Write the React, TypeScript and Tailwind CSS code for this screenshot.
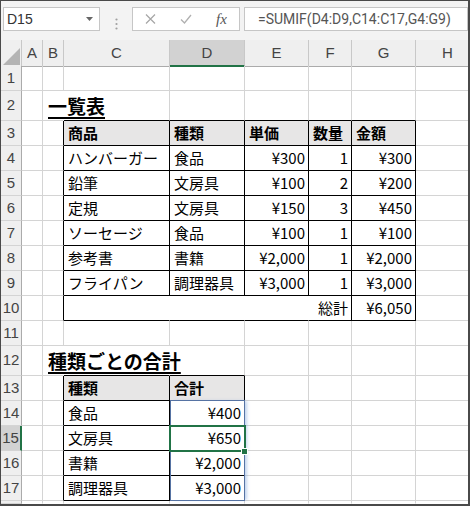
import React from 'react';

const COLS = 'grid grid-cols-[21px_21px_21px_106px_75px_64px_43px_64px_64px]';
const LETTERS = ['A', 'B', 'C', 'D', 'E', 'F', 'G', 'H'];

type Cell = { t: string; right?: boolean; bold?: boolean; fill?: boolean; title?: boolean };
type Box = { r1: number; r2: number; c1: number; c2: number };

const cells: Record<string, Cell> = {
  B2: { t: '一覧表', title: true },
  C3: { t: '商品', bold: true, fill: true },
  D3: { t: '種類', bold: true, fill: true },
  E3: { t: '単価', bold: true, fill: true },
  F3: { t: '数量', bold: true, fill: true },
  G3: { t: '金額', bold: true, fill: true },
  B12: { t: '種類ごとの合計', title: true },
  C13: { t: '種類', bold: true, fill: true },
  D13: { t: '合計', bold: true, fill: true },
  F10: { t: '総計', right: true },
  G10: { t: '¥6,050', right: true },
};

const items = [
  ['ハンバーガー', '食品', '¥300', '1', '¥300'],
  ['鉛筆', '文房具', '¥100', '2', '¥200'],
  ['定規', '文房具', '¥150', '3', '¥450'],
  ['ソーセージ', '食品', '¥100', '1', '¥100'],
  ['参考書', '書籍', '¥2,000', '1', '¥2,000'],
  ['フライパン', '調理器具', '¥3,000', '1', '¥3,000'],
];
items.forEach((row, i) => {
  row.forEach((t, j) => {
    cells[LETTERS[j + 2] + (i + 4)] = { t, right: j >= 2 };
  });
});

const totals = [
  ['食品', '¥400'],
  ['文房具', '¥650'],
  ['書籍', '¥2,000'],
  ['調理器具', '¥3,000'],
];
totals.forEach(([k, v], i) => {
  cells['C' + (i + 14)] = { t: k };
  cells['D' + (i + 14)] = { t: v, right: true };
});

// bordered boxes (merged C10:F10 is one box)
const boxes: Box[] = [];
for (let r = 3; r <= 9; r++) for (let c = 3; c <= 7; c++) boxes.push({ r1: r, r2: r, c1: c, c2: c });
boxes.push({ r1: 10, r2: 10, c1: 3, c2: 6 });
boxes.push({ r1: 10, r2: 10, c1: 7, c2: 7 });
for (let r = 13; r <= 17; r++) for (let c = 3; c <= 4; c++) boxes.push({ r1: r, r2: r, c1: c, c2: c });

const boxOf = (r: number, c: number) =>
  boxes.find((b) => r >= b.r1 && r <= b.r2 && c >= b.c1 && c <= b.c2);

// overflowing titles hide the gridline under them
const noRight = new Set(['B2', 'B12', 'C12']);

function edge(r: number, c: number, r2: number, c2: number) {
  const a = boxOf(r, c);
  const b = boxOf(r2, c2);
  if (a && a === b) return 'none';
  if (a || b) return 'black';
  return 'grid';
}

const rowNums = Array.from({ length: 18 }, (_, i) => i + 1);
const rowH = (n: number) => (n === 2 || n === 12 ? 'h-[30px]' : n === 18 ? 'h-[3px]' : 'h-[25px]');

function GridCell({ r, c }: { r: number; c: number }) {
  const key = LETTERS[c - 1] + r;
  const cell = cells[key];
  const re = noRight.has(key) ? 'none' : edge(r, c, r, c + 1);
  const be = r === 18 ? 'none' : edge(r, c, r + 1, c);
  const rc = re === 'black' ? 'border-r-black' : re === 'none' ? 'border-r-transparent' : 'border-r-[#d4d4d4]';
  const bc = be === 'black' ? 'border-b-black' : be === 'none' ? 'border-b-transparent' : 'border-b-[#d4d4d4]';

  if (cell?.title) {
    return (
      <div className={`relative flex items-end border-r border-b ${rc} ${bc}`}>
        <span className="relative z-10 whitespace-nowrap pl-[5px] pb-[3px] text-[19px] leading-[22px] font-bold underline underline-offset-[3px] decoration-[1.5px]">
          {cell.t}
        </span>
      </div>
    );
  }

  return (
    <div
      className={`flex items-center overflow-hidden border-r border-b ${rc} ${bc} ${
        cell?.fill ? 'bg-[#e7e6e6]' : ''
      } ${cell?.right ? 'justify-end pr-[3px]' : 'pl-[4px]'}`}
    >
      {cell && (
        <span className={`whitespace-nowrap text-[15px] leading-[20px] ${cell.bold ? 'font-bold' : ''}`}>{cell.t}</span>
      )}
    </div>
  );
}

export default function App() {
  return (
    <div className="h-[506px] w-[470px] overflow-hidden border-t border-l border-r-2 border-b-2 border-[#4a4a4a] bg-white">
      {/* Formula bar */}
      <div className="flex h-[39px] bg-[#f3f3f3] pt-[6px] pl-[2px]">
        <div className="flex h-[24px] w-[97px] shrink-0 items-center justify-between border border-[#c6c6c6] bg-white pl-[3px] pr-[6px]">
          <span className="font-['Liberation_Sans',sans-serif] text-[14px] text-[#333]">D15</span>
          <svg width="7" height="4" viewBox="0 0 7 4">
            <path d="M0 0h7L3.5 4z" fill="#666" />
          </svg>
        </div>
        <div className="flex w-[32px] shrink-0 items-center justify-center">
          <svg width="3" height="12" viewBox="0 0 3 12">
            <circle cx="1.5" cy="1.5" r="1.1" fill="#a0a0a0" />
            <circle cx="1.5" cy="6" r="1.1" fill="#a0a0a0" />
            <circle cx="1.5" cy="10.5" r="1.1" fill="#a0a0a0" />
          </svg>
        </div>
        <div className="flex h-[24px] w-[108px] shrink-0 items-center border border-[#c6c6c6] bg-white pl-[12px]">
          <svg width="11" height="10" viewBox="0 0 11 10">
            <path d="M1 0.5l9 9M10 0.5l-9 9" stroke="#a6a6a6" strokeWidth="1.2" />
          </svg>
          <svg width="12" height="10" viewBox="0 0 12 10" className="ml-[24px]">
            <path d="M1 5.5l3.5 3.5L11 1" stroke="#b0b0b0" strokeWidth="1.3" fill="none" />
          </svg>
          <span className="ml-[24px] font-['Liberation_Serif',serif] text-[15px] italic leading-none text-[#555]">
            fx
          </span>
        </div>
        <div className="ml-[4px] flex h-[24px] flex-1 items-center border border-[#c6c6c6] bg-white pl-[13px]">
          <span className="whitespace-nowrap font-['Roboto',sans-serif] text-[14px] text-[#555]">
            =SUMIF(D4:D9,C14:C17,G4:G9)
          </span>
        </div>
      </div>

      {/* Column headers */}
      <div className={`${COLS} h-[26px] bg-[#efefef] font-['Liberation_Sans',sans-serif] text-[15px] text-[#444]`}>
        <div className="relative border-r border-b border-r-[#c8c8c8] border-b-[#ababab]">
          <svg width="17" height="17" viewBox="0 0 17 17" className="absolute right-[1px] bottom-[1px]">
            <path d="M17 0V17H0z" fill="#b4b4b4" />
          </svg>
        </div>
        {LETTERS.map((l) =>
          l === 'D' ? (
            <div key={l} className="flex items-center justify-center border-r border-b-2 border-r-[#c8c8c8] border-b-[#217346] bg-[#d2d2d2] pt-[2px]">
              {l}
            </div>
          ) : (
            <div key={l} className="flex items-center justify-center border-r border-b border-r-[#c8c8c8] border-b-[#ababab]">
              {l}
            </div>
          )
        )}
      </div>

      {/* Sheet body */}
      <div className="relative font-['Noto_Sans_CJK_JP',sans-serif] text-black">
        {rowNums.map((r) => (
          <div key={r} className={`${COLS} ${rowH(r)}`}>
            {r === 15 ? (
              <div className="flex items-center justify-center border-r-2 border-b border-r-[#217346] border-b-[#d4d4d4] bg-[#d2d2d2] font-['Liberation_Sans',sans-serif] text-[15px] text-[#444]">
                {r}
              </div>
            ) : (
              <div className="flex items-center justify-center overflow-hidden border-r border-b border-r-[#ababab] border-b-[#d4d4d4] bg-[#efefef] font-['Liberation_Sans',sans-serif] text-[15px] text-[#444]">
                {r === 18 ? '' : r}
              </div>
            )}
            {LETTERS.map((_, i) => (
              <GridCell key={i} r={r} c={i + 1} />
            ))}
          </div>
        ))}

        {/* range highlight D14:D17 */}
        <div className="absolute left-[169px] top-[334px] h-[101px] w-[75px] border border-[#5673a3] shadow-[3px_0_3px_-1px_rgba(120,160,220,0.45)]" />
        {/* active cell D15 */}
        <div className="absolute left-[168px] top-[359px] h-[27px] w-[77px] border-2 border-[#217346]" />
        <div className="absolute left-[240px] top-[382px] h-[7px] w-[7px] border border-white bg-[#217346]" />
      </div>
    </div>
  );
}
